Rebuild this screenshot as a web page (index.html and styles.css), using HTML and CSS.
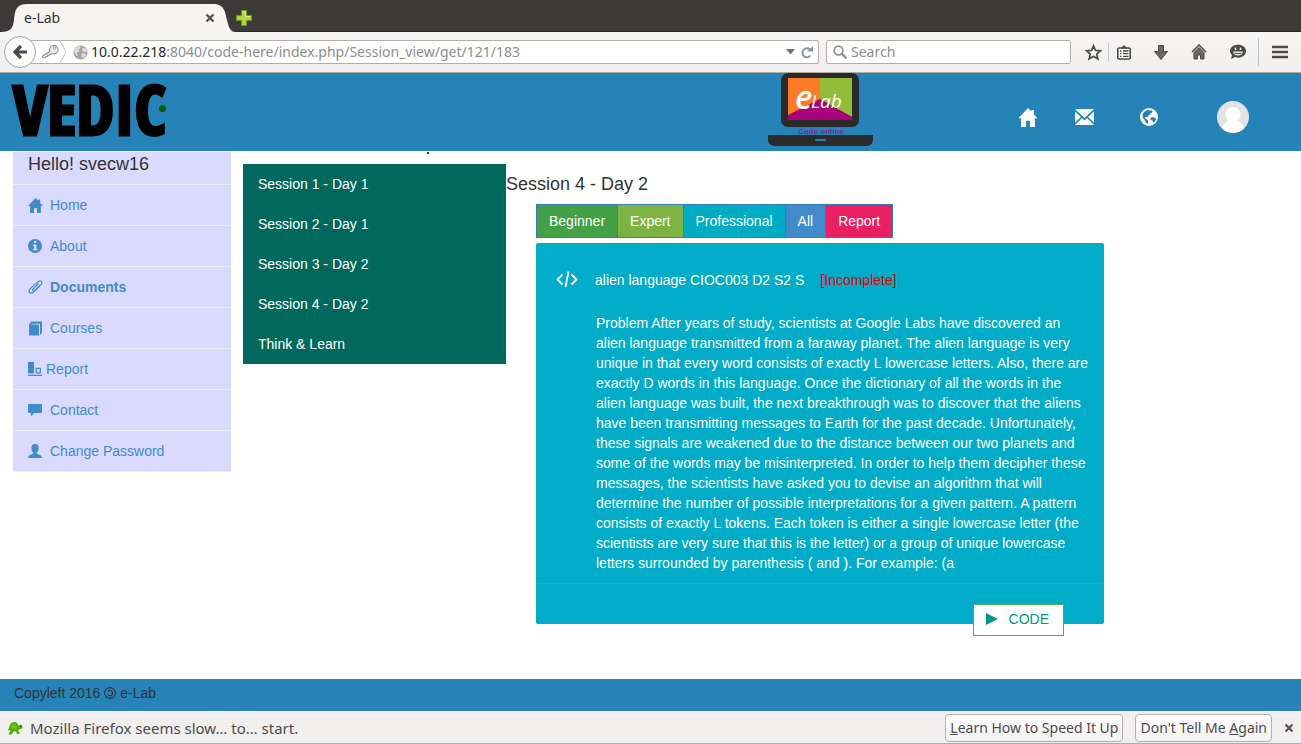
FILE: index.html
```html
<!DOCTYPE html>
<html lang="en">
<head>
<meta charset="utf-8">
<title>e-Lab</title>
<link rel="stylesheet" href="styles.css">
</head>
<body>
<svg class="defs" aria-hidden="true">
  <symbol id="home" viewBox="0 0 20 20"><path d="M10 0l3.600 3.800V2h2.600v4.600L20 10.800h-2.800V20H12v-6.500H8V20H2.800v-9.200H0z"/></symbol>
</svg>
<div class="tabbar">
  <div class="tab">
    <svg class="tab-shape" viewBox="0 0 236 28" aria-hidden="true"><path d="M0 28C11 28 13 24 14 16C15 5 17 0 27 0H213C224 0 225 7 227 16C229 25 231 28 236 28Z" fill="#f6f5f4"/></svg>
    <span class="tab-title">e-Lab</span>
    <button class="plain" aria-label="Close tab"><svg width="10" height="10" viewBox="0 0 10 10"><path d="M1.500 1.500l7 7M8.500 1.500l-7 7" stroke="#55534f" stroke-width="2.400"/></svg></button>
  </div>
  <button class="plain newtab" aria-label="New tab"><svg width="16" height="16" viewBox="0 0 16 16"><path d="M5.500.5h5v5h5v5h-5v5h-5v-5h-5v-5h5z" fill="#b3d33e" stroke="#6f9a17"/><path d="M6.500 1.500h3v5h5" fill="none" stroke="#dcec8b"/></svg></button>
</div>
<div class="toolbar">
  <button class="back" aria-label="Back"><svg width="16" height="16" viewBox="0 0 16 16"><path d="M9 2L3 8l6 6M3 8h12" fill="none" stroke="#4c4b48" stroke-width="3.200"/></svg></button>
  <div class="urlbar">
    <svg width="18" height="16" viewBox="0 0 20 18"><path d="M10 8.500A4.800 4.800 0 1 1 13 11H10.500L9 12.500H7.500V14H6L4.500 15.500H2L1.500 13.500z" fill="#f3f3f1" stroke="#8d8c89" stroke-width="1.200"/><circle cx="15" cy="4.500" r="1.400" fill="#fff" stroke="#8d8c89"/></svg>
    <svg class="chev" width="8" height="22" viewBox="0 0 8 22"><path d="M1 0l6 11-6 11" fill="none" stroke="#c5c4c2"/></svg>
    <svg width="15" height="15" viewBox="0 0 16 16"><circle cx="8" cy="8" r="7.500" fill="#a5a4a2"/><path d="M1 6l3-4 3-1 1 2-2 2 1 2-3 1 1 3-1 1-2-3zM10 3l4 1 1 4-2-1-2 1-1-2zM9 9l4 0 1 2-3 3-2-2z" fill="#dededc"/></svg>
    <div class="url" role="textbox" aria-label="Address"><b>10.0.22.218</b>:8040/code-here/index.php/Session_view/get/121/183</div>
    <button class="plain" aria-label="History"><svg width="9" height="6" viewBox="0 0 9 6"><path d="M0 0h9L4.500 5.500z" fill="#72716e"/></svg></button>
    <button class="plain reload" aria-label="Reload"><svg width="12" height="13" viewBox="0 0 12 13"><path d="M9.500 9.500A4.500 4.500 0 1 1 9 3.500" fill="none" stroke="#8799a6" stroke-width="2"/><path d="M6 5.500h6V0z" fill="#8799a6"/></svg></button>
  </div>
  <label class="search"><svg width="14" height="14" viewBox="0 0 14 14"><circle cx="5.500" cy="5.500" r="4.300" fill="none" stroke="#93918e" stroke-width="1.800"/><path d="M8.700 8.700l4.600 4.600" stroke="#93918e" stroke-width="2.400"/></svg><input type="text" placeholder="Search" aria-label="Search"></label>
  <div class="tools">
    <button class="plain" aria-label="Bookmark"><svg width="17" height="17" viewBox="0 0 17 17"><path d="M8.500 1.800l2 4.600 5 .4-3.800 3.300 1.200 4.900-4.400-2.700L4.100 15l1.200-4.900L1.500 6.800l5-.4z" fill="#fff" stroke="#4c4b48" stroke-width="1.700"/></svg></button>
    <i class="sep"></i>
    <button class="plain list" aria-label="Bookmarks list"><svg width="14" height="15" viewBox="0 0 14 15"><path d="M2 3h10q1.200 0 1.200 1.200v8.600q0 1.200-1.200 1.200H2Q.8 14 .8 12.800V4.200Q.8 3 2 3z" fill="#fff" stroke="#4c4b48" stroke-width="1.600"/><path d="M3.500 3.500L7 0l3.500 3.500z" fill="#4c4b48"/><path d="M3 6h1.500M3 8.700h1.500M3 11.400h1.500M6 6h5.500M6 8.700h5.500M6 11.400h5.500" stroke="#4c4b48" stroke-width="1.300"/></svg></button>
    <button class="plain" aria-label="Downloads"><svg width="14" height="15" viewBox="0 0 14 15"><path d="M4.500.5h5v6h4L7 14.500.5 6.500h4z" fill="#686765" stroke="#4c4b48"/></svg></button>
    <button class="plain" aria-label="Home page"><svg width="16" height="16" viewBox="0 0 16 16"><path d="M1 8l7-7 7 7" fill="none" stroke="#4c4b48" stroke-width="1.500"/><path d="M3 8.500l5-5 5 5V15H9.500v-4h-3v4H3z" fill="#686765" stroke="#4c4b48"/></svg></button>
    <button class="plain" aria-label="Hello chat"><svg width="16" height="16" viewBox="0 0 16 16"><path d="M8 .8c4.700 0 8 2.500 8 6.300s-3.300 6.600-7.600 6.600c-1.200 0-2.400-.2-3.400-.7L1 15l1-4C.8 10 0 8.600 0 7.100 0 3.300 3.300.8 8 .8z" fill="#4c4b48"/><path d="M5.500 3.800v2.200M10.500 3.800v2.200" stroke="#fff" stroke-width="1.500"/><path d="M3 7.500h10c-.4 2.500-2.300 4-5 4s-4.600-1.500-5-4z" fill="#eee"/><path d="M4.500 9.200q3.500 1 7 0" stroke="#4c4b48" fill="none"/></svg></button>
    <i class="sep tall"></i>
    <button class="plain menu" aria-label="Menu"><svg width="16" height="14" viewBox="0 0 16 14"><path d="M0 2h16M0 7h16M0 12h16" stroke="#4c4b48" stroke-width="2.600"/></svg></button>
  </div>
</div>

<header class="header">
  <a class="brand" href="#">VEDIC<i class="brand-dot"></i></a>
  <svg class="laptop" width="106" height="74" viewBox="0 0 106 74" role="img" aria-label="eLab Code online">
    <rect x="13" y="0" width="78" height="54" rx="7" fill="#2a2a2a"/>
    <path d="M20 5h33v22L20 44z" fill="#ff7a26"/><path d="M52 5h32v39L52 27z" fill="#92bd39"/><path d="M20 47v-5l32-16 32 18v3z" fill="#a9007c"/>
    <text x="27" y="36" class="logo-e">e</text><text x="43" y="35" class="logo-lab">Lab</text>
    <text x="53" y="61" class="logo-sub">Code online</text>
    <path d="M0 62h105v4q0 7-7 7H7q-7 0-7-7z" fill="#2a2a2a"/><path d="M47 66h11v1q0 1-1 1h-9q-1 0-1-1z" fill="#2985b9"/>
  </svg>
  <nav class="topnav">
    <a href="#" aria-label="Home"><svg width="20" height="19" viewBox="0 0 20 20"><use href="#home"/></svg></a>
    <a href="#" class="mail" aria-label="Messages"><svg width="19" height="16" viewBox="0 0 19 16"><path d="M0 0h19L9.500 9zM0 2.500L6 8l-6 5.500zM19 2.500L13 8l6 5.500zM7 9l2.500 2.400L12 9l7 7H0z"/></svg></a>
    <a href="#" class="globe" aria-label="Language"><svg width="18" height="18" viewBox="0 0 18 18"><circle cx="9" cy="9" r="9"/><path d="M4 4l3-2 2 0 0 1 2-1 1.500 1.500-1 1.500-1.500 0 .5 1.500-2 1-1 1.500-2 0-.5 1.500 1.500.5 1.500 1.500 0 3-1.500 0-1.500-3-2-2.500-.5-3.500zM10.500 10l2-1 3 1 .5 1.500-1.500 2.500-1.500.5-.5-2-2-.5z" fill="#2683b7"/></svg></a>
    <a href="#" class="avatar" aria-label="Profile"><svg width="32" height="32" viewBox="0 0 32 32"><circle cx="16" cy="16" r="16" fill="#e2e2e2"/><path d="M16 6c4.500 0 7.500 3.200 7.500 7.400 0 3-1.300 5.200-3.200 6.600 3.400 1 5.700 3.500 6.700 7.600A16 16 0 0 1 5 27.600c1-4.100 3.300-6.600 6.700-7.600-1.900-1.400-3.200-3.600-3.200-6.600C8.500 9.200 11.500 6 16 6z"/></svg></a>
  </nav>
</header>

<main class="main">
  <nav class="sidebar">
    <h4>Hello! svecw16</h4>
    <a href="#"><svg width="15" height="15" viewBox="0 0 20 20"><use href="#home"/></svg>Home</a>
    <a href="#"><svg width="15" height="14" viewBox="0 0 15 14"><circle cx="7" cy="7" r="7"/><path d="M6 2h2.300v2H6zM5 5.500h3.400V10h1v1.200H5V10h1V6.800H5z" fill="#dadaff"/></svg>About</a>
    <a href="#" class="active"><svg width="15" height="14" viewBox="0 0 15 14"><path d="M10.500 3.500L5 9.200q-.8 1-.1 1.600t1.600-.2l6.700-6.500q1.300-1.500.2-2.700t-2.800 0L2.200 8.600q-2 2.300-.4 3.900t3.900-.4l6.300-6.300" fill="none" stroke="#428bca" stroke-width="1.200"/></svg>Documents</a>
    <a href="#"><svg width="15" height="15" viewBox="0 0 15 15"><path d="M1 3.500L3.500.5H14V12l-2 2V2.800H4L2.800 3.600H11V14.500H1z"/></svg>Courses</a>
    <a href="#" class="tight"><svg width="15" height="14" viewBox="0 0 15 14"><path d="M0 0h6v11.500H0zM0 12.700h14V14H0zM7.500 5.800H13v5.700H7.500zM8.800 7.100v3.100h2.900V7.100z" fill-rule="evenodd"/></svg>Report</a>
    <a href="#"><svg width="15" height="14" viewBox="0 0 15 14"><path d="M1 1h12q1 0 1 1v7q0 1-1 1H6l-3 3.500V10H1q-1 0-1-1V2q0-1 1-1z"/></svg>Contact</a>
    <a href="#"><svg width="15" height="14" viewBox="0 0 15 14"><path d="M7 0c2.500 0 3.600 1.600 3.600 4 0 2-.8 3.600-1.800 4.400v1.300c2.700.8 5.200 1.700 5.200 4.300H0c0-2.600 2.500-3.500 5.200-4.300V8.400C4.200 7.600 3.400 6 3.400 4 3.400 1.600 4.500 0 7 0z"/></svg>Change Password</a>
  </nav>
  <div class="sessions-col">
    <i class="mark"></i>
    <nav class="sessions">
      <a href="#">Session 1 - Day 1</a>
      <a href="#">Session 2 - Day 1</a>
      <a href="#">Session 3 - Day 2</a>
      <a href="#">Session 4 - Day 2</a>
      <a href="#">Think &amp; Learn</a>
    </nav>
  </div>
  <section class="content">
    <h4>Session 4 - Day 2</h4>
    <div class="panel">
      <div class="levels">
        <button class="beginner">Beginner</button><button class="expert">Expert</button><button class="pro">Professional</button><button class="all">All</button><button class="report">Report</button>
      </div>
      <article class="card">
        <div class="card-head">
          <svg width="22" height="18" viewBox="0 0 22 18"><path d="M6.500 3.500L1.500 8.500l5 5M15.500 3.500l5 5-5 5M12.500 .5L9.500 16" fill="none" stroke="#fff" stroke-width="1.800"/></svg>
          <span>alien language CIOC003 D2 S2 S</span><span class="status">[Incomplete]</span>
        </div>
        <p>Problem After years of study, scientists at Google Labs have discovered an alien language transmitted from a faraway planet. The alien language is very unique in that every word consists of exactly L lowercase letters. Also, there are exactly D words in this language. Once the dictionary of all the words in the alien language was built, the next breakthrough was to discover that the aliens have been transmitting messages to Earth for the past decade. Unfortunately, these signals are weakened due to the distance between our two planets and some of the words may be misinterpreted. In order to help them decipher these messages, the scientists have asked you to devise an algorithm that will determine the number of possible interpretations for a given pattern. A pattern consists of exactly L tokens. Each token is either a single lowercase letter (the scientists are very sure that this is the letter) or a group of unique lowercase letters surrounded by parenthesis ( and ). For example: (a</p>
        <div class="card-foot"></div>
        <button class="code"><svg width="12" height="12" viewBox="0 0 12 12"><path d="M0 0l12 6-12 6z" fill="#009688"/></svg>CODE</button>
      </article>
    </div>
  </section>
</main>

<footer class="footer">Copyleft 2016 <svg width="12" height="12" viewBox="0 0 11 11" role="img" aria-label="copyleft"><circle cx="5.500" cy="5.500" r="4.900" fill="none" stroke="#333"/><path d="M3.500 4.200q.6-1.200 2-1.200 2.300.2 2.300 2.500T5.500 8q-1.400 0-2-1.200" fill="none" stroke="#333"/></svg> e-Lab</footer>

<div class="notice">
  <svg width="16" height="14" viewBox="0 0 16 14"><path d="M2 7q1-6 5-6 4 0 4.500 4l1-1q3-1 3 2 0 2-3 2l-1.500 1.500 2 3.500h-3L9 10.500H6L5 13.500H1.500L3.500 9 .5 9.500z" fill="#4fad0d"/><path d="M4 5l3-2.500L10 5 9 8H5z" fill="#6cc51f"/><circle cx="13.500" cy="5.500" r=".7" fill="#285500"/></svg>
  <span class="notice-text">Mozilla Firefox seems slow… to… start.</span>
  <button class="sys"><u>L</u>earn How to Speed It Up</button>
  <button class="sys">Don't Tell Me <u>A</u>gain</button>
  <button class="plain" aria-label="Close"><svg width="10" height="10" viewBox="0 0 10 10"><path d="M1.500 1.500l7 7M8.500 1.500l-7 7" stroke="#55534f" stroke-width="2.200"/></svg></button>
</div>
</body>
</html>
```
FILE: styles.css
```css
* { box-sizing: border-box; }
body {
  margin: 0;
  min-height: 100vh;
  display: flex;
  flex-direction: column;
  background: #fff;
  color: #333;
  font: 14px/20px "Liberation Sans", Arial, sans-serif;
}
a { color: inherit; text-decoration: none; }
button, input { font: inherit; color: inherit; }
h4 { margin: 0; font-size: 18px; font-weight: 400; line-height: 20px; }
svg { flex: none; }
.defs { position: absolute; width: 0; height: 0; }
.plain { display: flex; padding: 0; border: 0; background: none; }

/* Browser chrome */
.tabbar, .toolbar, .notice { font-family: "Noto Sans", sans-serif; }
.tabbar {
  display: flex;
  align-items: flex-end;
  height: 32px;
  background: #3c3b37;
  border-bottom: 1px solid #262522;
}
.tab {
  position: relative;
  display: flex;
  align-items: center;
  justify-content: space-between;
  width: 236px;
  height: 28px;
  margin-bottom: -1px;
  padding: 0 21px 0 24px;
}
.tab-shape { position: absolute; inset: 0; }
.tab-title, .tab .plain { position: relative; }
.newtab { padding-bottom: 5px; }
.toolbar {
  display: flex;
  align-items: center;
  height: 41px;
  padding: 0 13px 0 4px;
  background: linear-gradient(#f6f5f4, #f0efee);
  border-bottom: 1px solid #b0aba5;
}
.back {
  z-index: 1;
  display: flex;
  align-items: center;
  justify-content: center;
  width: 32px;
  height: 32px;
  padding: 0;
  border: 1px solid #9fa8b5;
  border-radius: 50%;
  background: #fbfbfa;
}
.urlbar, .search {
  display: flex;
  align-items: center;
  height: 24px;
  background: #fff;
  border: 1px solid #b2aea9;
  border-radius: 2px;
}
.urlbar { flex: 1; margin-left: -6px; padding: 0 5px 0 10px; }
.chev { margin: 0 6px 0 0; }
.url { flex: 1; margin-left: 3px; color: #8e8d8b; white-space: nowrap; }
.url b { font-weight: 400; color: #262626; }
.reload { margin-left: 6px; }
.search { width: 245px; margin-left: 7px; padding: 0 6px; }
.search input { flex: 1; min-width: 0; margin-left: 4px; padding: 0; border: 0; outline: 0; background: none; }
.search input::placeholder { color: #8e8d8b; opacity: 1; }
.tools { display: flex; align-items: center; gap: 23px; margin-left: 14px; }
.sep { width: 1px; height: 18px; margin-left: -17px; background: #c3c9ce; }
.list { margin-left: -15px; }
.tall { height: 28px; margin-left: -11px; background: #bcc4cc; }
.menu { margin-left: -10px; }

/* Site header */
.header {
  display: flex;
  height: 78px;
  padding: 0 52px 0 11px;
  background: #2683b7;
}
.brand {
  position: relative;
  padding: 0 2px;
  color: #000;
  font: 700 68px/72px "Liberation Sans Narrow", "Open Sans Condensed", "Roboto Condensed", Roboto, sans-serif;
  -webkit-text-stroke: 3px #000;
}
.brand-dot { position: absolute; right: 2px; top: 32px; width: 7px; height: 7px; border-radius: 50%; background: #055a05; }
.laptop { margin-left: auto; }
.logo-e { font: italic 600 33px "Open Sans", sans-serif; fill: #fff; }
.logo-lab { font: italic 19px "Open Sans", sans-serif; fill: #fff; }
.logo-sub { font: 700 8px "Liberation Sans", sans-serif; fill: #8e2191; text-anchor: middle; }
.topnav { display: flex; align-items: center; margin-left: 144px; padding-top: 10px; }
.topnav a { display: flex; }
.topnav svg { fill: #fff; }
.mail { margin-left: 37px; }
.globe { margin-left: 46px; }
.avatar { margin-left: 59px; }

/* Page body */
.main { flex: 1; display: flex; align-items: flex-start; padding: 1px 197px 42px 13px; }
.sidebar { flex: none; width: 218px; background: #dadaff; color: #428bca; }
.sidebar h4 { height: 33px; padding: 2px 15px 0; border-bottom: 1px solid #eee; color: #333; }
.sidebar a { display: flex; align-items: center; gap: 7px; padding: 10px 15px; border-bottom: 1px solid #eee; }
.sidebar svg { fill: #428bca; }
.sidebar .active { font-weight: 700; }
.sidebar .tight { gap: 3px; }
.sessions-col { flex: none; width: 263px; margin-left: 12px; }
.mark { display: block; width: 2px; height: 2px; margin: 0 0 10px 184px; background: #333; }
.sessions { background: #00695c; color: #fff; }
.sessions a { display: block; padding: 10px 15px; }
.content { flex: 1; min-width: 0; padding-top: 22px; }
.panel { padding: 10px 0 0 30px; }
.levels { display: flex; }
.levels button {
  height: 34px;
  padding: 6px 12px;
  border: 1px solid #357ebd;
  color: #fff;
}
.levels button + button { margin-left: -1px; }
.levels .beginner { background: #43a047; }
.levels .expert { background: #7cb342; }
.levels .pro { background: #00acc1; }
.levels .all { background: #428bca; }
.levels .report { background: #e91e63; }
.card { position: relative; margin-top: 5px; border-radius: 2px; background: #00acc7; color: #fff; }
.card-head { display: flex; align-items: center; padding: 27px 20px 23px; }
.card-head svg { margin-right: 17px; }
.status { margin-left: 16px; color: #e00000; }
.card p { margin: 0; padding: 0 14px 10px 60px; }
.card-foot { height: 41px; border-top: 1px solid #1bb2ca; }
.code {
  position: absolute;
  right: 40px;
  bottom: -12px;
  display: flex;
  align-items: center;
  gap: 11px;
  height: 32px;
  padding: 0 14px 2px 12px;
  border: 1px solid #4caf50;
  background: #fff;
  color: #009688;
}

.footer { height: 32px; padding: 4px 14px; background: #2683b7; }
.footer svg { vertical-align: -1px; }
.notice {
  display: flex;
  align-items: center;
  height: 33px;
  padding: 0 7px;
  border-top: 1px solid #fff;
  border-bottom: 1px solid #b0aba5;
  background: #f1f0ee;
  color: #4c4c4c;
}
.notice-text { flex: 1; margin-left: 7px; font-size: 15px; }
.sys {
  height: 28px;
  margin-right: 12px;
  padding: 0 4px;
  border: 1px solid #b5b1ac;
  border-radius: 4px;
  background: linear-gradient(#fff, #f3f2f1);
}
```
